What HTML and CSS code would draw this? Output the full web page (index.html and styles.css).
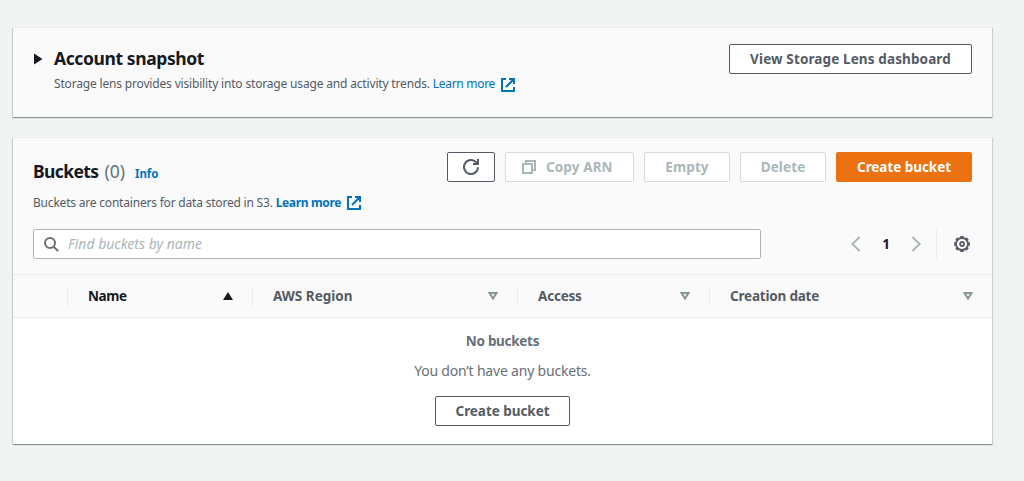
FILE: index.html
```html
<!DOCTYPE html>
<html lang="en">
<head>
<meta charset="utf-8">
<title>S3 buckets</title>
<link rel="stylesheet" href="styles.css">
</head>
<body>
<main class="page">
  <section class="panel snapshot">
    <svg class="caret" width="9" height="12" viewBox="0 0 9 12"><path d="M0 .5 8.500 6 0 11.500Z" fill="#16191f"/></svg>
    <div class="snapshot-text">
      <h2 class="title">Account snapshot</h2>
      <p class="desc"><span>Storage lens provides visibility into storage usage and activity trends.</span><a class="link">Learn more</a><svg class="ext" width="14" height="14" viewBox="0 0 14 14"><path d="M5 1H1v12h12V9M8 1h5v5M13 1 5 9" fill="none" stroke="#0073bb" stroke-width="2"/></svg></p>
    </div>
    <button class="btn w-lens"><span>View Storage Lens dashboard</span></button>
  </section>

  <section class="panel buckets">
    <header class="head">
      <div class="head-text">
        <div class="title-row"><h2 class="title">Buckets</h2><span class="count">(0)</span><a class="info">Info</a></div>
        <p class="desc"><span>Buckets are containers for data stored in S3.</span><a class="link bold">Learn more</a><svg class="ext" width="14" height="14" viewBox="0 0 14 14"><path d="M5 1H1v12h12V9M8 1h5v5M13 1 5 9" fill="none" stroke="#0073bb" stroke-width="2"/></svg></p>
      </div>
      <div class="actions">
        <button class="btn w-refresh" aria-label="Refresh"><svg width="16" height="16" viewBox="0 0 16 16" fill="none" stroke="#545b64" stroke-width="2"><path d="M15 8.200A7 7 0 1 1 13 3.100L14.600 4.800"/><path d="M15 0v5h-5"/></svg></button>
        <button class="btn disabled w-copy"><svg width="14" height="14" viewBox="0 0 14 14" fill="none" stroke="#aab7b8" stroke-width="2"><path d="M1 4h9v9H1Z"/><path d="M4 4V1h9v9h-3"/></svg><span>Copy ARN</span></button>
        <button class="btn disabled w-empty"><span>Empty</span></button>
        <button class="btn disabled w-empty"><span>Delete</span></button>
        <button class="btn primary w-create"><span class="t-create">Create bucket</span></button>
      </div>
    </header>

    <div class="tools">
      <div class="search">
        <svg width="15" height="15" viewBox="0 0 15 15" fill="none" stroke="#687078" stroke-width="2"><circle cx="6" cy="6" r="5"/><path d="m9.500 9.500 4.600 4.600"/></svg>
        <span class="placeholder">Find buckets by name</span>
      </div>
      <div class="pager">
        <svg width="10" height="16" viewBox="0 0 10 16" fill="none" stroke="#aab7b8" stroke-width="2"><path d="M8.600 1 1.400 8l7.200 7"/></svg>
        <span class="page-no">1</span>
        <svg width="10" height="16" viewBox="0 0 10 16" fill="none" stroke="#aab7b8" stroke-width="2"><path d="M1.400 1 8.600 8l-7.200 7"/></svg>
      </div>
      <div class="settings">
        <svg width="16" height="16" viewBox="0 0 16 16" fill="none" stroke="#545b64"><circle cx="8" cy="8" r="6" stroke-width="1.800"/><path d="M6.300 1h3.400M6.300 15h3.400M1 6.300v3.400M15 6.300v3.400M11.800 1.900l2.300 2.300M1.900 11.800l2.300 2.300M4.200 1.900 1.900 4.200M14.100 11.800l-2.300 2.300" stroke-width="1.800"/><circle cx="8" cy="8" r="2" stroke-width="1.800"/></svg>
      </div>
    </div>

    <div class="thead">
      <div class="th th-check"></div>
      <div class="th sorted"><span class="t-name">Name</span><svg width="10" height="8" viewBox="0 0 10 8"><path d="M5 0 10 8H0Z" fill="#16191f"/></svg></div>
      <div class="th"><span>AWS Region</span><svg width="10" height="8" viewBox="0 0 10 8"><path d="M1.500 1h7L5 6.500Z" fill="none" stroke="#879596" stroke-width="2"/></svg></div>
      <div class="th"><span class="t-date">Access</span><svg width="10" height="8" viewBox="0 0 10 8"><path d="M1.500 1h7L5 6.500Z" fill="none" stroke="#879596" stroke-width="2"/></svg></div>
      <div class="th"><span class="t-date">Creation date</span><svg width="10" height="8" viewBox="0 0 10 8"><path d="M1.500 1h7L5 6.500Z" fill="none" stroke="#879596" stroke-width="2"/></svg></div>
    </div>

    <div class="empty">
      <b class="t-none">No buckets</b>
      <p class="t-dont">You don’t have any buckets.</p>
      <button class="btn w-create2"><span class="t-create">Create bucket</span></button>
    </div>
  </section>
</main>
</body>
</html>
```
FILE: styles.css
```css
* { box-sizing: border-box; }
body {
  margin: 0;
  background: #f2f3f3;
  color: #545b64;
  font-family: "Noto Sans", "Open Sans", sans-serif;
  font-size: 14px;
  line-height: 20px;
}
h2, p { margin: 0; }
svg { display: block; flex: none; }
span, a, h2, b, p { white-space: nowrap; }
.page { display: flex; flex-direction: column; gap: 20px; width: 980px; padding: 27px 0 30px; margin-left: 13px; }
.panel {
  width: 979px;
  background: #fafafa;
  border-top: 1px solid #eaeded;
  box-shadow: 0 1px 1px 0 rgba(0,28,36,.25), 1px 1px 1px 0 rgba(0,28,36,.13), -1px 1px 1px 0 rgba(0,28,36,.13);
}
.snapshot { display: flex; align-items: flex-start; height: 90px; padding: 16px 20px 0 21px; }
.caret { margin: 9px 11px 0 0; }
.snapshot-text { flex: 1; padding-top: 3px; }
.title { font-size: 17.500px; line-height: 22px; font-weight: 700; letter-spacing: -.4px; color: #16191f; }
.desc { display: flex; align-items: center; height: 18px; font-size: 12px; line-height: 16px; letter-spacing: -.17px; }
.snapshot .desc { margin-top: 6px; }
.link { color: #0073bb; margin-left: 3px; letter-spacing: -.3px; }
.bold { font-weight: 700; letter-spacing: -.35px; }
.ext { margin: 1px 0 0 6px; }

.btn {
  display: flex; align-items: center; justify-content: center;
  height: 30px; padding: 0; flex: none;
  background: #fff; color: #545b64;
  border: 1px solid #545b64; border-radius: 2px;
  font: 700 13.500px/20px "Noto Sans", "Open Sans", sans-serif;
  letter-spacing: .12px;
}
.t-create { letter-spacing: -.05px; }
.disabled { color: #aab7b8; border-color: #d5dbdb; }
.primary { background: #ec7211; border-color: #ec7211; color: #fff; }
.w-lens { width: 243px; }
.w-refresh { width: 48px; }
.w-copy { width: 129px; gap: 10px; justify-content: flex-start; padding-left: 16px; }
.w-empty { width: 86px; }
.w-create { width: 136px; }
.w-create2 { width: 135px; }

.buckets { height: 307px; background: #fff; }
.head { display: flex; justify-content: space-between; height: 91px; padding: 14px 20px 0; background: #fafafa; }
.title-row { display: flex; align-items: baseline; margin-top: 8px; }
.head .title { letter-spacing: -.6px; }
.count { margin-left: 6px; font-size: 17.500px; line-height: 22px; color: #687078; }
.info { margin-left: 10px; font-size: 11.500px; letter-spacing: -.1px; font-weight: 700; color: #0073bb; }
.head .desc { margin-top: 10px; letter-spacing: -.2px; }
.head .ext { margin-top: -1px; }
.actions { display: flex; gap: 10px; }

.tools { display: flex; height: 45px; padding: 0 20px; background: #fafafa; }
.search {
  display: flex; align-items: center; gap: 9px;
  width: 728px; height: 30px; padding-left: 10px;
  border: 1px solid #aab7b8; border-radius: 2px; background: #fff;
}
.placeholder { font-style: italic; color: #aab7b8; }
.pager { display: flex; align-items: center; justify-content: space-between; width: 70px; height: 30px; margin-left: 90px; }
.page-no { font-size: 13.500px; font-weight: 700; color: #16191f; }
.settings { display: flex; align-items: center; justify-content: flex-end; width: 35px; height: 30px; margin-left: 15px; padding-right: 1px; border-left: 1px solid #eaeded; }

.thead {
  display: grid; grid-template-columns: 54px 185px 265px 192px 283px;
  align-items: center; height: 44px; background: #fafafa;
  border-top: 1px solid #eaeded; border-bottom: 1px solid #eaeded;
  font-size: 13.500px; font-weight: 700;
}
.th { display: flex; align-items: center; justify-content: space-between; height: 21px; padding: 0 19px 0 20px; border-left: 1px solid #eaeded; }
.th-check { border-left: 0; }
.sorted { color: #16191f; }
.t-name { letter-spacing: -.4px; }
.t-date { letter-spacing: -.2px; }

.empty { display: flex; flex-direction: column; align-items: center; padding-top: 13px; color: #687078; }
.t-none { font-size: 13.500px; letter-spacing: -.3px; }
.t-dont { margin: 10px 0 15px; letter-spacing: -.2px; }
```
